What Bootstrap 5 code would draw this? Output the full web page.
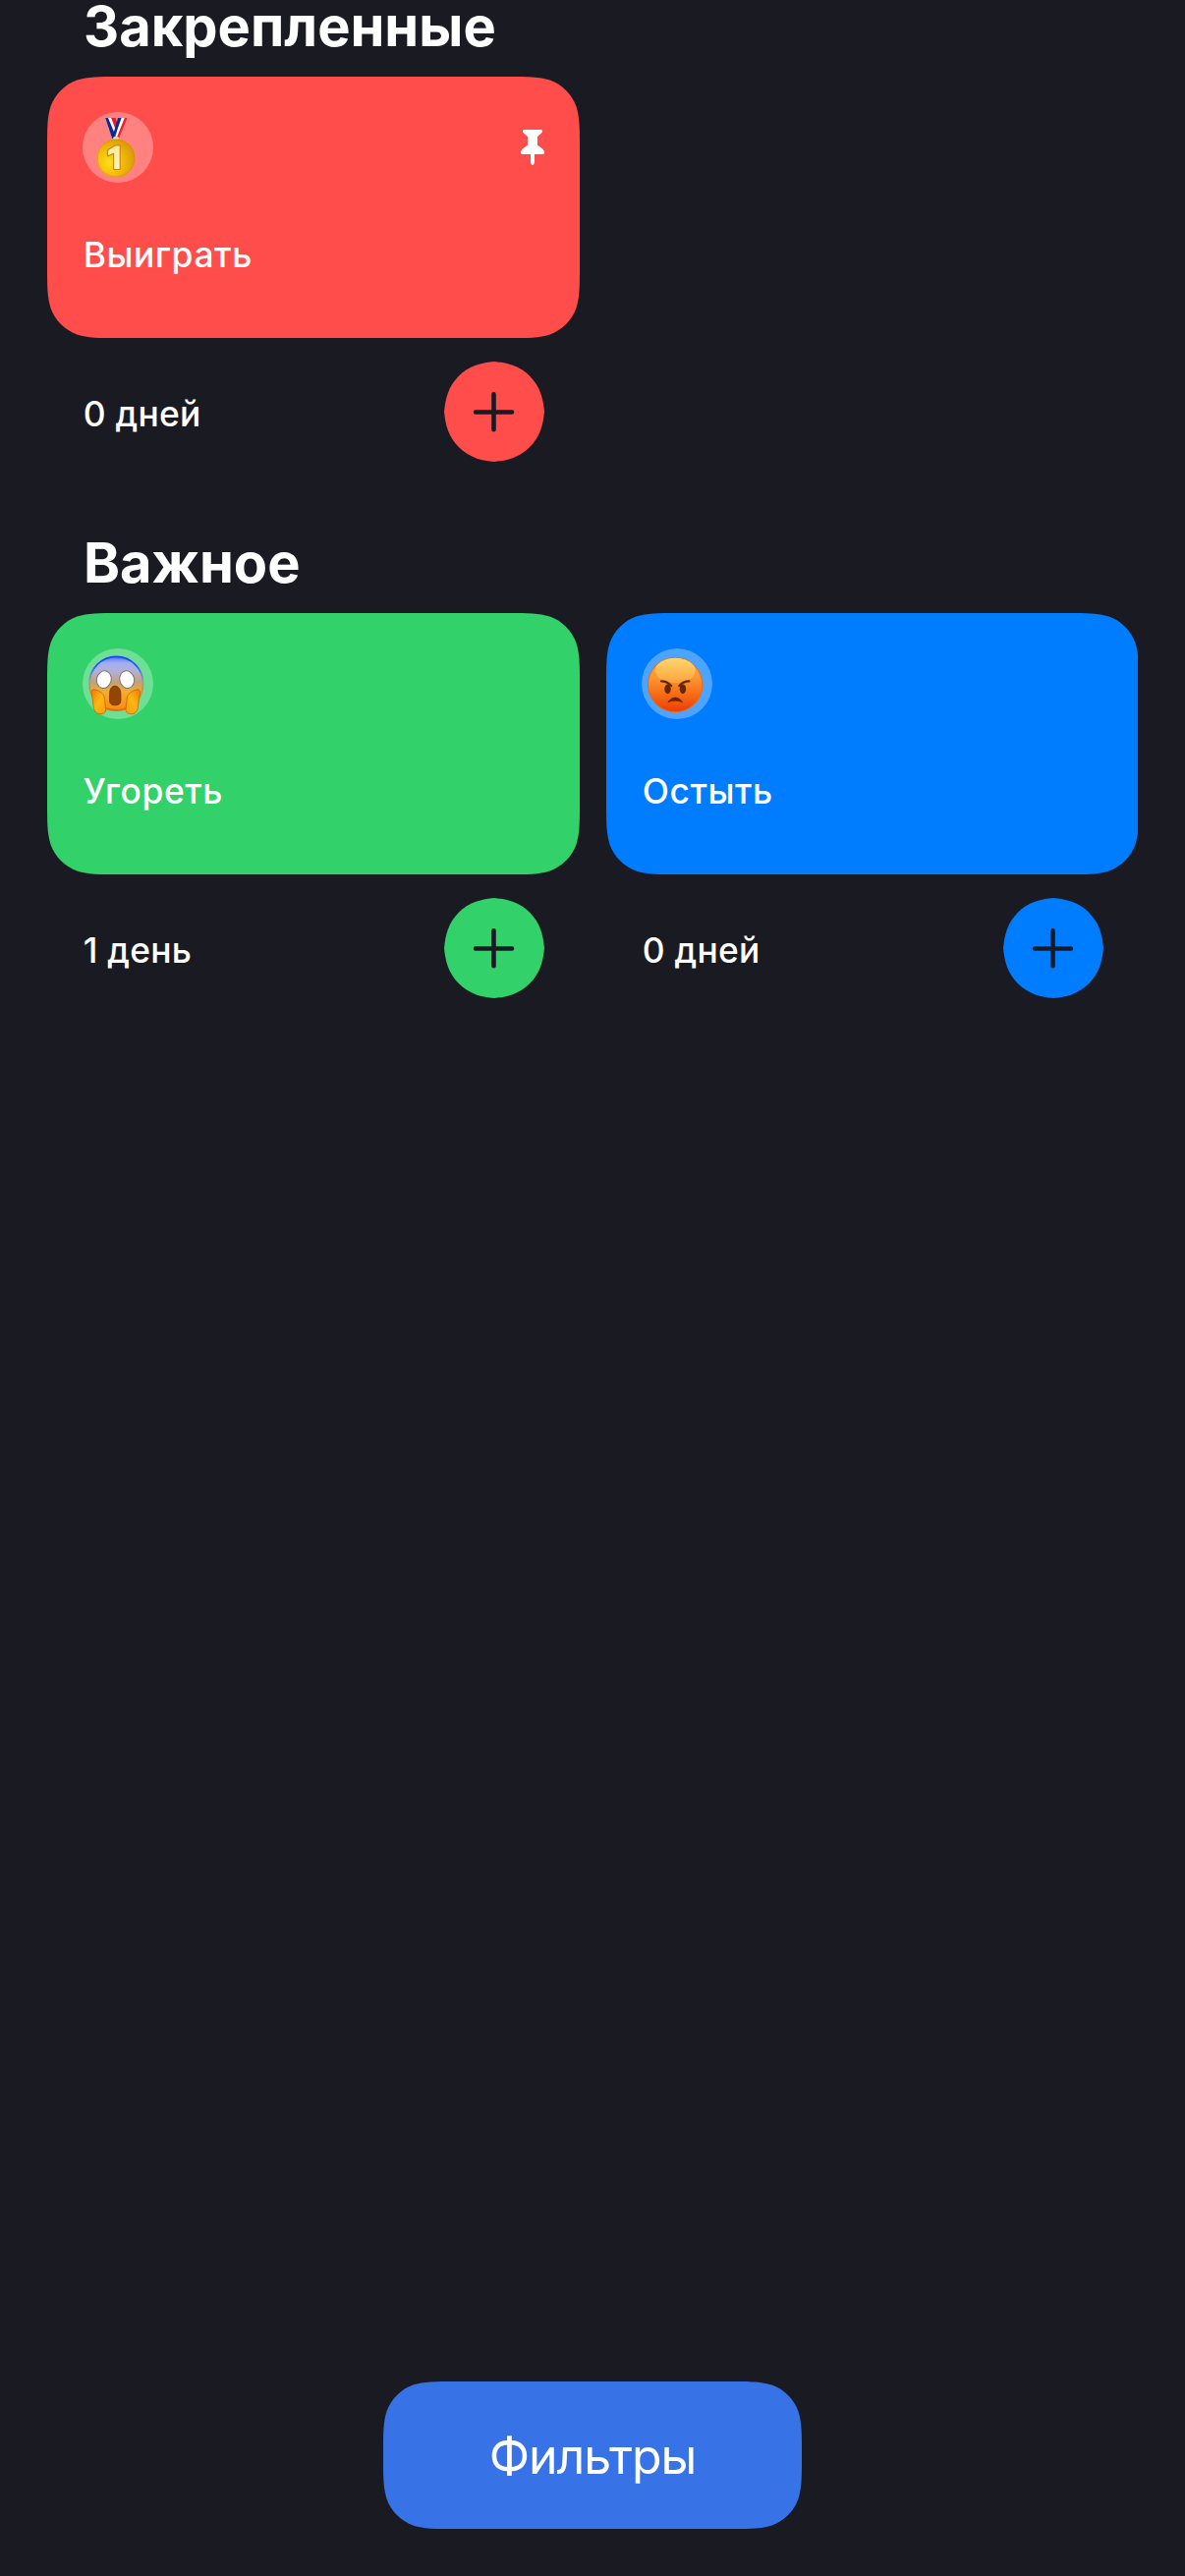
<!DOCTYPE html>
<html lang="ru" data-bs-theme="dark">
<head>
<meta charset="utf-8">
<meta name="viewport" content="width=device-width, initial-scale=1">
<title>Трекеры</title>
<link href="https://cdn.jsdelivr.net/npm/bootstrap@5.3.0/dist/css/bootstrap.min.css" rel="stylesheet">
<style>
body{background:#1a1b22;color:#fff;font-family:Inter,"Noto Sans",sans-serif}
.screen{height:2622px;padding:0 48px 48px}
.section-title{font-size:56px;line-height:54px;font-weight:700;margin:0 0 24px;padding-left:37px}
.tracker-grid{display:grid;grid-template-columns:542px 542px;gap:27px}
.tracker-section + .tracker-section{margin-top:76px}
.tracker{--tone:#ff4d4b}
.tone-green{--tone:#33d169}
.tone-blue{--tone:#007dff}
/* continuous-curvature corners, radius 48 */
.tile{height:266px;padding:36px;background:var(--tone);
clip-path:path("M73.4 0H468.6C489.8 0 500.3 0 511.7 3.6C524.1 8.1 533.9 17.9 538.4 30.3C542 41.7 542 52.2 542 73.4V192.6C542 213.8 542 224.3 538.4 235.7C533.9 248.1 524.1 257.9 511.7 262.4C500.3 266 489.8 266 468.6 266H73.4C52.2 266 41.7 266 30.3 262.4C17.9 257.9 8.1 248.1 3.6 235.7C0 224.3 0 213.8 0 192.6V73.4C0 52.2 0 41.7 3.6 30.3C8.1 17.9 17.9 8.1 30.3 3.6C41.7 0 52.2 0 73.4 0Z")}
.emoji{width:72px;height:72px;background:rgba(255,255,255,.3)}
.label{font-size:35.4px;line-height:42px;font-weight:500;letter-spacing:.6px;padding-left:.7px}
.tile .label{margin-top:53px}
.tile-foot{height:102px;margin-top:24px;padding:0 36px}
.tile-foot .label{padding-top:5px;letter-spacing:.25px}
.add{width:102px;height:102px;border:0;padding:0;background:var(--tone);
clip-path:path("M51 0C57 .6 64 1.7 69.8 3.8C83 8.6 93.4 19 98.2 32.2C100.3 38 101.4 45 102 51C101.4 57 100.3 64 98.2 69.8C93.4 83 83 93.4 69.8 98.2C64 100.3 57 101.4 51 102C45 101.4 38 100.3 32.2 98.2C19 93.4 8.6 83 3.8 69.8C1.7 64 .6 57 0 51C.6 45 1.7 38 3.8 32.2C8.6 19 19 8.6 32.2 3.8C38 1.7 45 .6 51 0Z")}
.filters{width:426px;height:150px;background:#3772e7;border:0;padding:2px 0 0;color:#fff;font-size:50px;line-height:62px;letter-spacing:-1.1px;
clip-path:path("M73.4 0H352.6C373.8 0 384.3 0 395.7 3.6C408.1 8.1 417.9 17.9 422.4 30.3C426 41.7 426 52.2 426 73.4V76.6C426 97.8 426 108.3 422.4 119.7C417.9 132.1 408.1 141.9 395.7 146.4C384.3 150 373.8 150 352.6 150H73.4C52.2 150 41.7 150 30.3 146.4C17.9 141.9 8.1 132.1 3.6 119.7C0 108.3 0 97.8 0 76.6V73.4C0 52.2 0 41.7 3.6 30.3C8.1 17.9 17.9 8.1 30.3 3.6C41.7 0 52.2 0 73.4 0Z")}
svg{display:block}
</style>
</head>
<body>
<svg width="0" height="0" class="position-absolute" aria-hidden="true">
<defs>
<symbol id="plus" viewBox="0 0 102 102"><path d="M50.5 33.3V69.2M32 51.5H69" fill="none" stroke="#1a1b22" stroke-width="4.6" stroke-linecap="round"/></symbol>
<radialGradient id="gold" cx=".32" cy=".62" r=".75"><stop offset="0" stop-color="#ffdc18"/><stop offset=".5" stop-color="#f2b90a"/><stop offset="1" stop-color="#d79305"/></radialGradient>
<linearGradient id="digit" x1="0" y1="0" x2="0" y2="1"><stop offset="0" stop-color="#ffe99a"/><stop offset="1" stop-color="#fff3bd"/></linearGradient>
<linearGradient id="fear" x1="0" y1="0" x2="0" y2="1"><stop offset="0" stop-color="#5571f5"/><stop offset=".12" stop-color="#a3aef2"/><stop offset=".28" stop-color="#b3b0d8"/><stop offset=".48" stop-color="#c3a177"/><stop offset=".66" stop-color="#f6ad2c"/><stop offset="1" stop-color="#f58a16"/></linearGradient>
<linearGradient id="rim" x1="0" y1="0" x2="0" y2="1"><stop offset="0" stop-color="#0647ff"/><stop offset=".2" stop-color="#2864f0"/><stop offset=".48" stop-color="#9a8590" stop-opacity=".5"/><stop offset=".7" stop-color="#e98a17"/><stop offset="1" stop-color="#e66c0b"/></linearGradient>
<linearGradient id="hand" x1="0" y1="0" x2="1" y2="1"><stop offset="0" stop-color="#e97a08"/><stop offset=".5" stop-color="#ffb611"/><stop offset="1" stop-color="#f69b0a"/></linearGradient>
<linearGradient id="anger" x1="0" y1="0" x2="0" y2="1"><stop offset="0" stop-color="#fb9a32"/><stop offset=".35" stop-color="#fd9a32"/><stop offset=".68" stop-color="#f66b16"/><stop offset="1" stop-color="#ea3d05"/></linearGradient>
<linearGradient id="shine" x1="0" y1="0" x2="0" y2="1"><stop offset="0" stop-color="#ffd873"/><stop offset="1" stop-color="#ffc55c" stop-opacity=".3"/></linearGradient>
</defs>
</svg>

<main class="screen d-flex flex-column">
  <section class="tracker-section">
    <h2 class="section-title">Закрепленные</h2>
    <div class="tracker-grid overflow-hidden">
      <article class="tracker">
        <div class="tile">
          <div class="d-flex justify-content-between">
            <div class="emoji rounded-circle">
              <svg width="72" height="72" viewBox="0 0 72 72" aria-label="Медаль">
                <path d="M31 24.5L41 6h4.3L37 26Z" fill="#e51c2b"/>
                <path d="M29.5 21L36.6 6h5.6L33.5 26.5Z" fill="#fff"/>
                <path d="M23.3 6h5L36 24l-2 3h-3.8Z" fill="#0a2a96"/>
                <path d="M26 6h3.3l5.3 15-1 3Z" fill="#fff"/>
                <path d="M29.3 6h4.3l2.2 6.5-2.2 5Z" fill="#e51c2b"/>
                <path d="M36 6h3.6L33 25l-1.6-3Z" fill="#0a2a96"/>
                <path d="M40.5 6h2.4L35.5 24.5l-1.3 2-.7-2Z" fill="#fff"/>
                <path d="M43 6h2.4L37.2 26h-2Z" fill="#ed2430"/>
                <rect x="31" y="25" width="6" height="4" rx="2" fill="#ead9a4"/>
                <circle cx="34" cy="47" r="19.5" fill="url(#gold)"/>
                <circle cx="34" cy="47" r="18.8" fill="none" stroke="#c98b05" stroke-opacity=".5" stroke-width="1"/>
                <path d="M33 34h5.2v24.5h-6.6V42.2L25.5 45v-6.3Z" fill="url(#digit)" stroke="#c38508" stroke-width="1.1" stroke-linejoin="round"/>
              </svg>
            </div>
            <svg width="24" height="72" viewBox="0 0 24 72" aria-label="Закреплено"><path d="M3.8 18H20.2C22.3 18 22.6 20 21.3 21.3L17 25.1V34C21.5 36 24 39.2 24 41.2C24 42.4 23.3 43 22.2 43H14V50C14 52 13.2 54 12 54S10 52 10 50V43H1.8C.7 43 0 42.4 0 41.2C0 39.2 2.5 36 7 34V25.1L2.7 21.3C1.4 20 1.7 18 3.8 18Z" fill="#fff"/></svg>
          </div>
          <div class="label">Выиграть</div>
        </div>
        <div class="tile-foot d-flex align-items-center justify-content-between">
          <span class="label">0 дней</span>
          <button class="add" type="button" aria-label="Добавить"><svg width="102" height="102"><use href="#plus"/></svg></button>
        </div>
      </article>
    </div>
  </section>

  <section class="tracker-section">
    <h2 class="section-title">Важное</h2>
    <div class="tracker-grid overflow-hidden">
      <article class="tracker tone-green">
        <div class="tile">
          <div class="emoji rounded-circle">
            <svg width="72" height="72" viewBox="0 0 72 72" aria-label="Крик ужаса">
              <circle cx="34.3" cy="35.7" r="27.3" fill="url(#fear)" stroke="url(#rim)" stroke-width="1.8"/>
              <ellipse cx="21.8" cy="31.7" rx="7.4" ry="8.9" fill="#fff" stroke="#79736f" stroke-width="1" transform="rotate(14 21.8 31.7)"/>
              <ellipse cx="45.2" cy="31.7" rx="7.4" ry="8.9" fill="#fff" stroke="#79736f" stroke-width="1" transform="rotate(-14 45.2 31.7)"/>
              <path d="M27.6 46.5C27.6 41 30 38.3 33 38.3S38.8 41 38.8 46.5V53.2C38.8 56.2 36.5 57.8 33.2 57.8S27.6 56.2 27.6 53.2Z" fill="#934606" stroke="#7d3704" stroke-width="1"/>
              <path id="palm" d="M11.5 41.8C9.8 41.6 8.8 43.1 9.2 45.5L11.2 58.7C11.8 64.3 14.2 66.9 18.6 66.6C22.7 66.3 24.4 64.5 23.5 60.2C22.7 56 23.1 51.7 22 48.8C20.8 45.5 16 42.2 11.5 41.8Z" fill="url(#hand)" stroke="#c4640a" stroke-width=".8"/>
              <use href="#palm" transform="translate(67.7 0) scale(-1 1)"/>
            </svg>
          </div>
          <div class="label">Угореть</div>
        </div>
        <div class="tile-foot d-flex align-items-center justify-content-between">
          <span class="label">1 день</span>
          <button class="add" type="button" aria-label="Добавить"><svg width="102" height="102"><use href="#plus"/></svg></button>
        </div>
      </article>
      <article class="tracker tone-blue">
        <div class="tile">
          <div class="emoji rounded-circle">
            <svg width="72" height="72" viewBox="0 0 72 72" aria-label="Злость">
              <circle cx="34.2" cy="37" r="27.7" fill="url(#anger)" stroke="#ef6711" stroke-width="1"/>
              <ellipse cx="34.2" cy="22.5" rx="20.5" ry="12.8" fill="url(#shine)"/>
              <ellipse cx="26.5" cy="41.3" rx="3.2" ry="4.9" fill="#652603"/><ellipse cx="41.9" cy="41.3" rx="3.2" ry="4.9" fill="#652603"/>
              <path d="M20 33.4Q26.5 33.5 30.2 38.2M48.4 33.4Q41.9 33.5 38.2 38.2" fill="none" stroke="#652603" stroke-width="2.1" stroke-linecap="round"/>
              <path d="M26.9 54.6Q34.2 45.5 41.5 54.6Q34.2 51.4 26.9 54.6Z" fill="#6a2602" stroke="#6a2602" stroke-width="1" stroke-linejoin="round"/>
            </svg>
          </div>
          <div class="label">Остыть</div>
        </div>
        <div class="tile-foot d-flex align-items-center justify-content-between">
          <span class="label">0 дней</span>
          <button class="add" type="button" aria-label="Добавить"><svg width="102" height="102"><use href="#plus"/></svg></button>
        </div>
      </article>
    </div>
  </section>

  <div class="mt-auto d-flex justify-content-center">
    <button class="filters" type="button">Фильтры</button>
  </div>
</main>
<script src="https://cdn.jsdelivr.net/npm/bootstrap@5.3.0/dist/js/bootstrap.bundle.min.js"></script>
</body>
</html>
